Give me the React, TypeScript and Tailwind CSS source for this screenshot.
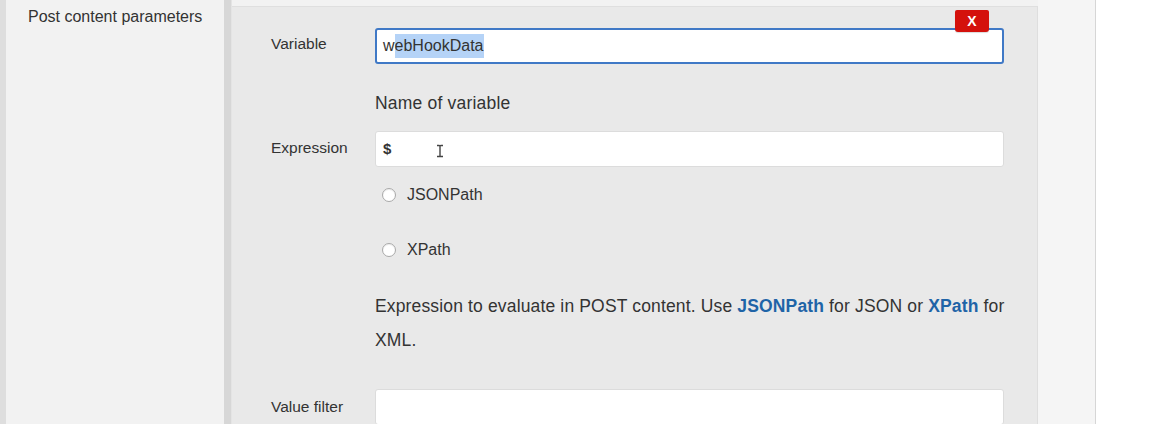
import React from "react";

function TextCursor() {
  return (
    <svg width="8" height="14" viewBox="0 0 8 14" fill="none" stroke="#444" strokeWidth="1.4">
      <path d="M1 1.5h2.2c.5 0 .8.3.8.8M7 1.5H4.8c-.5 0-.8.3-.8.8V11.7c0 .5-.3.8-.8.8H1M7 12.5H4.8c-.5 0-.8-.3-.8-.8" />
    </svg>
  );
}

function Radio({ label }: { label: string }) {
  return (
    <label className="flex items-center gap-[11px] h-6">
      <span className="ml-[7px] w-[14px] h-[14px] rounded-full bg-white border border-[#a9a9a9] shadow-[inset_0_1px_1px_rgba(0,0,0,0.08)]" />
      <span className="text-[16px] text-[#333]">{label}</span>
    </label>
  );
}

export default function App() {
  return (
    <div className="w-[1162px] h-[424px] bg-white overflow-hidden" style={{ fontFamily: '"Liberation Sans", Arial, sans-serif' }}>
      <div className="flex w-[1096px] h-full bg-[#f2f2f2] border-l-[6px] border-l-[#dedede] border-r border-r-[#d6d6d6]">
        {/* left label column */}
        <div className="w-[218px] shrink-0 pl-[22px] pt-[7px]">
          <div className="text-[16px] leading-5 text-[#333]">Post content parameters</div>
        </div>

        {/* nested block bar */}
        <div className="w-[8px] shrink-0 bg-[#d7d7d7] border-r border-r-[#e4e4e4]" />

        {/* nested panel */}
        <div className="mt-[6px] w-[806px] shrink-0 bg-[#e9e9e9] border-t border-t-[#dfdfdf] border-r border-r-[#dedede] pl-[39px] pt-[21px]">
          <div className="grid grid-cols-[104px_629px] items-start">
            {/* Variable */}
            <div className="text-[15.5px] text-[#333] pt-[6px] leading-5">Variable</div>
            <div className="relative">
              <div className="h-9 bg-white border-2 border-[#4079c6] rounded-[3px] pl-[6px] flex items-center text-[16px] text-[#333]">
                <span>w</span>
                <span className="bg-[#b5d3f7]">ebHookData</span>
              </div>
              <div className="absolute right-[15px] top-[-18px] w-[34px] h-[22px] bg-[#d4110c] rounded-b-[3px] rounded-t-[2px] flex items-center justify-center text-white text-[14px] font-bold shadow-[0_1px_1px_rgba(0,0,0,0.15)]">
                X
              </div>
            </div>

            <div />
            <div className="mt-[27px] text-[17.5px] tracking-[0.2px] leading-6 text-[#333]">Name of variable</div>

            {/* Expression */}
            <div className="mt-[16px] text-[15.5px] text-[#333] pt-[7px] leading-5">Expression</div>
            <div className="mt-[16px]">
              <div className="h-9 bg-white border border-[#dcdcdc] rounded-[3px] pl-[7px] flex items-center text-[15px] font-bold text-[#333]">
                <span>$</span>
                <span className="ml-[45px] mt-[3px]">
                  <TextCursor />
                </span>
              </div>
              <div className="mt-[16px]">
                <Radio label="JSONPath" />
              </div>
              <div className="mt-[31px]">
                <Radio label="XPath" />
              </div>
              <p className="mt-[27px] w-[640px] text-[17.5px] tracking-[0.15px] leading-[34px] text-[#333]">
                Expression to evaluate in POST content. Use{" "}
                <span className="text-[#1f64a7] font-bold">JSONPath</span> for JSON or{" "}
                <span className="text-[#1f64a7] font-bold">XPath</span> for XML.
              </p>
            </div>

            {/* Value filter */}
            <div className="mt-[32px] text-[15.5px] text-[#333] pt-[8px] leading-5">Value filter</div>
            <div className="mt-[32px]">
              <div className="h-9 bg-white border border-[#dcdcdc] rounded-[3px]" />
            </div>
          </div>
        </div>
        <div className="flex-1 bg-[#f5f5f5]" />
      </div>
    </div>
  );
}
